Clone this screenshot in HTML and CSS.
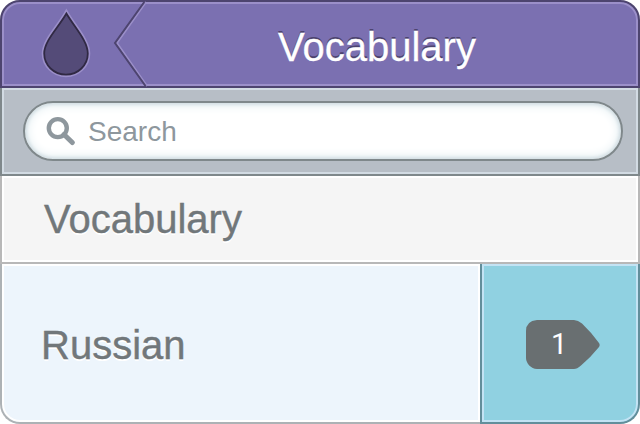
FILE: index.html
```html
<!DOCTYPE html>
<html lang="en">
<head>
<meta charset="utf-8">
<title>Vocabulary</title>
<link rel="stylesheet" href="styles.css">
</head>
<body>
<main class="panel">
  <header class="header">
    <svg class="back" width="150" height="88" viewBox="0 0 150 88" aria-hidden="true">
      <path class="drop-glow" d="M66.4 13.500C58 28 44.200 41 44.200 53.500A21.800 21.200 0 0 0 87.800 53.500C87.800 41 75 28 66.400 13.500Z"/>
      <path class="drop" d="M66.4 13.500C58 28 44.200 41 44.200 53.500A21.800 21.200 0 0 0 87.800 53.500C87.800 41 75 28 66.400 13.500Z"/>
      <path class="chevron-light" d="M146 2L117 43L147 86"/>
      <path class="chevron-dark" d="M144.300 2L115 43L145.500 86"/>
    </svg>
    <h1 class="title">Vocabulary</h1>
  </header>
  <div class="toolbar">
    <div class="search">
      <svg class="lens" width="30" height="30" viewBox="0 0 30 30" aria-hidden="true">
        <circle cx="12.800" cy="12.100" r="9"/>
        <path d="M19 18.500L27.300 26.500"/>
      </svg>
      <span class="placeholder">Search</span>
    </div>
  </div>
  <div class="section">Vocabulary</div>
  <div class="row">
    <div class="name">Russian</div>
    <div class="count">
      <div class="tag">
        <svg class="tag-shape" width="74" height="49" viewBox="0 0 74 49" aria-hidden="true">
          <path d="M11 0H48Q52 0 56 3.500Q65 12 73 23Q74.300 25 73 27Q65 37 55 45.500Q51 49 48 49H11C5 49 0 43 0 38V11Q0 1 11 0Z"/>
        </svg>
        <span class="number">1</span>
      </div>
    </div>
  </div>
</main>
</body>
</html>
```
FILE: styles.css
```css
* { box-sizing: border-box; }
body {
  margin: 0;
  background: #fff;
  font-family: "Liberation Sans", Arial, sans-serif;
}
.panel {
  width: 640px;
  height: 424px;
  display: grid;
  grid-template-rows: 88px 88px 88px 160px;
}
.header {
  display: flex;
  background: #7b70b1;
  border: 2px solid #4d446f;
  border-radius: 20px 20px 0 0;
  box-shadow: inset 0 0 0 2px #9b8fc9;
}
.back { flex: none; margin: -2px 0 0 -2px; }
.drop-glow { fill: #9b8fc9; stroke: #9b8fc9; stroke-width: 5; }
.drop { fill: #544b78; stroke: #302943; stroke-width: 1.8; }
.chevron-light, .chevron-dark { fill: none; stroke-width: 2; }
.chevron-light { stroke: #9b8fc9; }
.chevron-dark { stroke: #4d446f; }
.title {
  margin: 0 0 0 128px;
  font-size: 40px;
  font-weight: 400;
  line-height: 90px;
  color: #fff;
  -webkit-text-stroke: 0.3px #fff;
  text-shadow: 0 -2px 0 #4d446f;
}
.toolbar {
  padding: 13px 15px 13px 21px;
  background: #b7bec6;
  border: 2px solid #7f888b;
  border-top: 0;
  box-shadow: inset 0 0 0 2px #d2dbe3;
}
.search {
  display: flex;
  height: 60px;
  width: 600px;
  background: #fff;
  border: 2px solid #7f888b;
  border-radius: 30px;
  box-shadow: inset 0 0 3px 2px #d5e0e5, inset 0 0 8px 4px #eaf2f5;
}
.lens {
  margin: 13px 0 0 20px;
  fill: none;
  stroke: #8e979d;
  stroke-width: 4.4;
}
.lens path { stroke-width: 5; stroke-linecap: round; }
.placeholder {
  margin-left: 13px;
  font-size: 28px;
  line-height: 57px;
  color: #8e979d;
}
.section {
  padding-left: 42px;
  background: #f5f5f5;
  border: 2px solid #b8b8b8;
  border-top: 0;
  box-shadow: inset 0 0 0 2px #fff;
  font-size: 40px;
  line-height: 87px;
  color: #71777a;
  -webkit-text-stroke: 0.4px #71777a;
  text-shadow: 0 2px 0 #fff;
}
.row { display: grid; grid-template-columns: 480px 160px; }
.name, .count { height: 160px; }
.name {
  padding-left: 39px;
  background: #edf5fc;
  border: 2px solid #adb2b5;
  border-width: 0 0 2px 2px;
  border-radius: 0 0 0 20px;
  box-shadow: inset 0 0 0 2px #fff;
  font-size: 40px;
  line-height: 162px;
  color: #71777a;
  -webkit-text-stroke: 0.4px #71777a;
  text-shadow: 0 2px 0 #fff;
}
.count {
  display: flex;
  padding: 56px 0 0 44px;
  background: #90d1e1;
  border: 2px solid #628e9b;
  border-top: 0;
  border-radius: 0 0 20px 0;
  box-shadow: inset 0 0 0 2px #c3e3f4;
}
.tag { display: grid; width: 74px; height: 49px; }
.tag-shape, .number { grid-area: 1 / 1; }
.tag-shape { fill: #696f71; }
.number {
  padding-left: 25px;
  font-family: Roboto, sans-serif;
  font-size: 29px;
  line-height: 48px;
  color: #fff;
}
```
